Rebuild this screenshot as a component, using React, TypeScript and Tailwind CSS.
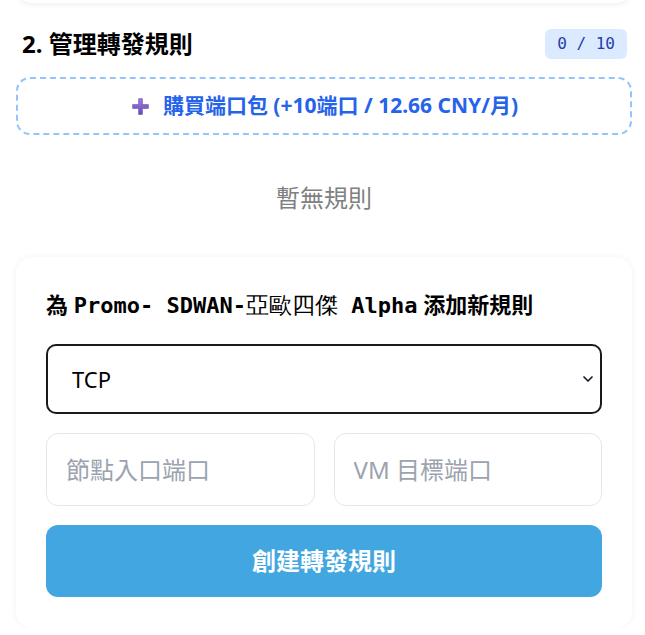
import { ChevronDown } from "lucide-react";

const sans = "font-['Noto_Sans','Noto_Sans_CJK_TC',sans-serif]";

function PlusIcon() {
    return (
        <svg width="21" height="21" viewBox="0 0 20 20" className="shrink-0">
            <defs>
                <linearGradient id="pg" x1="0" y1="0" x2="0" y2="1">
                    <stop offset="0" stopColor="#9b7fd9" />
                    <stop offset="1" stopColor="#6a4bb8" />
                </linearGradient>
            </defs>
            <path
                d="M8.2 2.5h3.6v5.7h5.7v3.6h-5.7v5.7H8.2v-5.7H2.5V8.2h5.7z"
                fill="url(#pg)"
                stroke="#6a4bb8"
                strokeWidth="0.6"
                strokeLinejoin="round"
            />
        </svg>
    );
}

export default function App() {
    return (
        <div className={`min-h-[635px] bg-white pl-4 pr-[13px] text-gray-900 ${sans}`}>
            <div className="-mt-10 h-[43px] rounded-2xl bg-white shadow-[0_1px_6px_rgba(0,0,0,0.08)]" />

            <div className="mt-[26px] flex items-center justify-between pl-1.5 pr-[5px]">
                <h2 className="text-[24px] font-bold leading-7 text-black">2. 管理轉發規則</h2>
                <span className="rounded-md bg-[#dbeafe] px-3 py-[3px] font-['DejaVu_Sans_Mono',monospace] text-[16px] text-[#1e40af]">
                    0 / 10
                </span>
            </div>

            <button className="mt-[18px] flex h-[58px] w-full items-center justify-center gap-3 rounded-[14px] border-2 border-dashed border-[#93c5fd] text-[21px] font-bold text-[#2563eb]">
                <PlusIcon />
                購買端口包 (+10端口 / 12.66 CNY/月)
            </button>

            <p className="mt-[47px] text-center text-[24px] leading-8 text-[#808080]">暫無規則</p>

            <div className="mt-[43px] rounded-2xl bg-white px-[30px] pt-[31px] pb-[31px] shadow-[0_0_6px_rgba(0,0,0,0.06)]">
                <h3 className="text-[22px] font-bold leading-8 text-black">
                    為{" "}
                    <span className="font-['DejaVu_Sans_Mono',serif]">
                        Promo- SDWAN-<span className="font-normal font-['serif'] text-[23px]">亞歐四傑</span> Alpha
                    </span>{" "}
                    添加新規則
                </h3>

                <div className="relative mt-[22px]">
                    <select className="h-[70px] w-full appearance-none rounded-[10px] border-2 border-[#1a1a1a] bg-white px-6 text-[22px] text-black outline-none">
                        <option>TCP</option>
                        <option>UDP</option>
                    </select>
                    <ChevronDown className="pointer-events-none absolute right-[6px] top-1/2 -translate-y-1/2" size={16} strokeWidth={2.5} />
                </div>

                <div className="mt-[19px] grid grid-cols-2 gap-[19px]">
                    <input
                        placeholder="節點入口端口"
                        className="h-[73px] w-full rounded-xl border border-[#e5e7eb] px-[19px] text-[24px] placeholder:text-[#9ca3af] outline-none"
                    />
                    <input
                        placeholder="VM 目標端口"
                        className="h-[73px] w-full rounded-xl border border-[#e5e7eb] px-[19px] text-[24px] placeholder:text-[#9ca3af] outline-none"
                    />
                </div>

                <button className="mt-[19px] h-[72px] w-full rounded-xl bg-[#42a6e1] text-[24px] font-bold text-white">
                    創建轉發規則
                </button>
            </div>
        </div>
    );
}
